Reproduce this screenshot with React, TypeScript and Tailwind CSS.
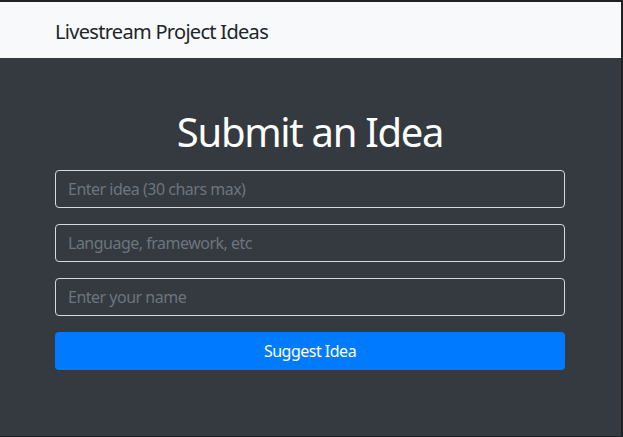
import React, { useState } from 'react';

function Field({ placeholder, value, onChange }: { placeholder: string; value: string; onChange: (v: string) => void }) {
  return (
    <input
      type="text"
      placeholder={placeholder}
      value={value}
      onChange={e => onChange(e.target.value)}
      className="block w-full h-[38px] px-3 rounded-[4px] border border-[#d6d8db] bg-transparent text-[16px] tracking-[-0.5px] text-white placeholder:text-[#6c757d] outline-none"
    />
  );
}

export default function App() {
  const [idea, setIdea] = useState('');
  const [lang, setLang] = useState('');
  const [name, setName] = useState('');

  return (
    <div className="h-screen flex flex-col bg-[#343a40] border-t-2 border-r-2 border-b border-[#202124] font-[Noto_Sans,sans-serif]">
      <nav className="h-[56px] bg-[#f8f9fa] flex items-center pt-[3px] pl-[55px]">
        <span className="text-[20px] text-[#212529] tracking-[-0.7px]">Livestream Project Ideas</span>
      </nav>

      <main className="w-[510px] ml-[55px] pt-[50px]">
        <h1 className="text-center text-[40px] leading-[48px] text-white tracking-[-1.3px] mb-[14px]">Submit an Idea</h1>
        <form className="flex flex-col gap-4" onSubmit={e => e.preventDefault()}>
          <Field placeholder="Enter idea (30 chars max)" value={idea} onChange={setIdea} />
          <Field placeholder="Language, framework, etc" value={lang} onChange={setLang} />
          <Field placeholder="Enter your name" value={name} onChange={setName} />
          <button type="submit" className="h-[38px] w-full rounded-[4px] bg-[#007bff] text-white text-[16px] tracking-[-0.5px]">
            Suggest Idea
          </button>
        </form>
      </main>
    </div>
  );
}
